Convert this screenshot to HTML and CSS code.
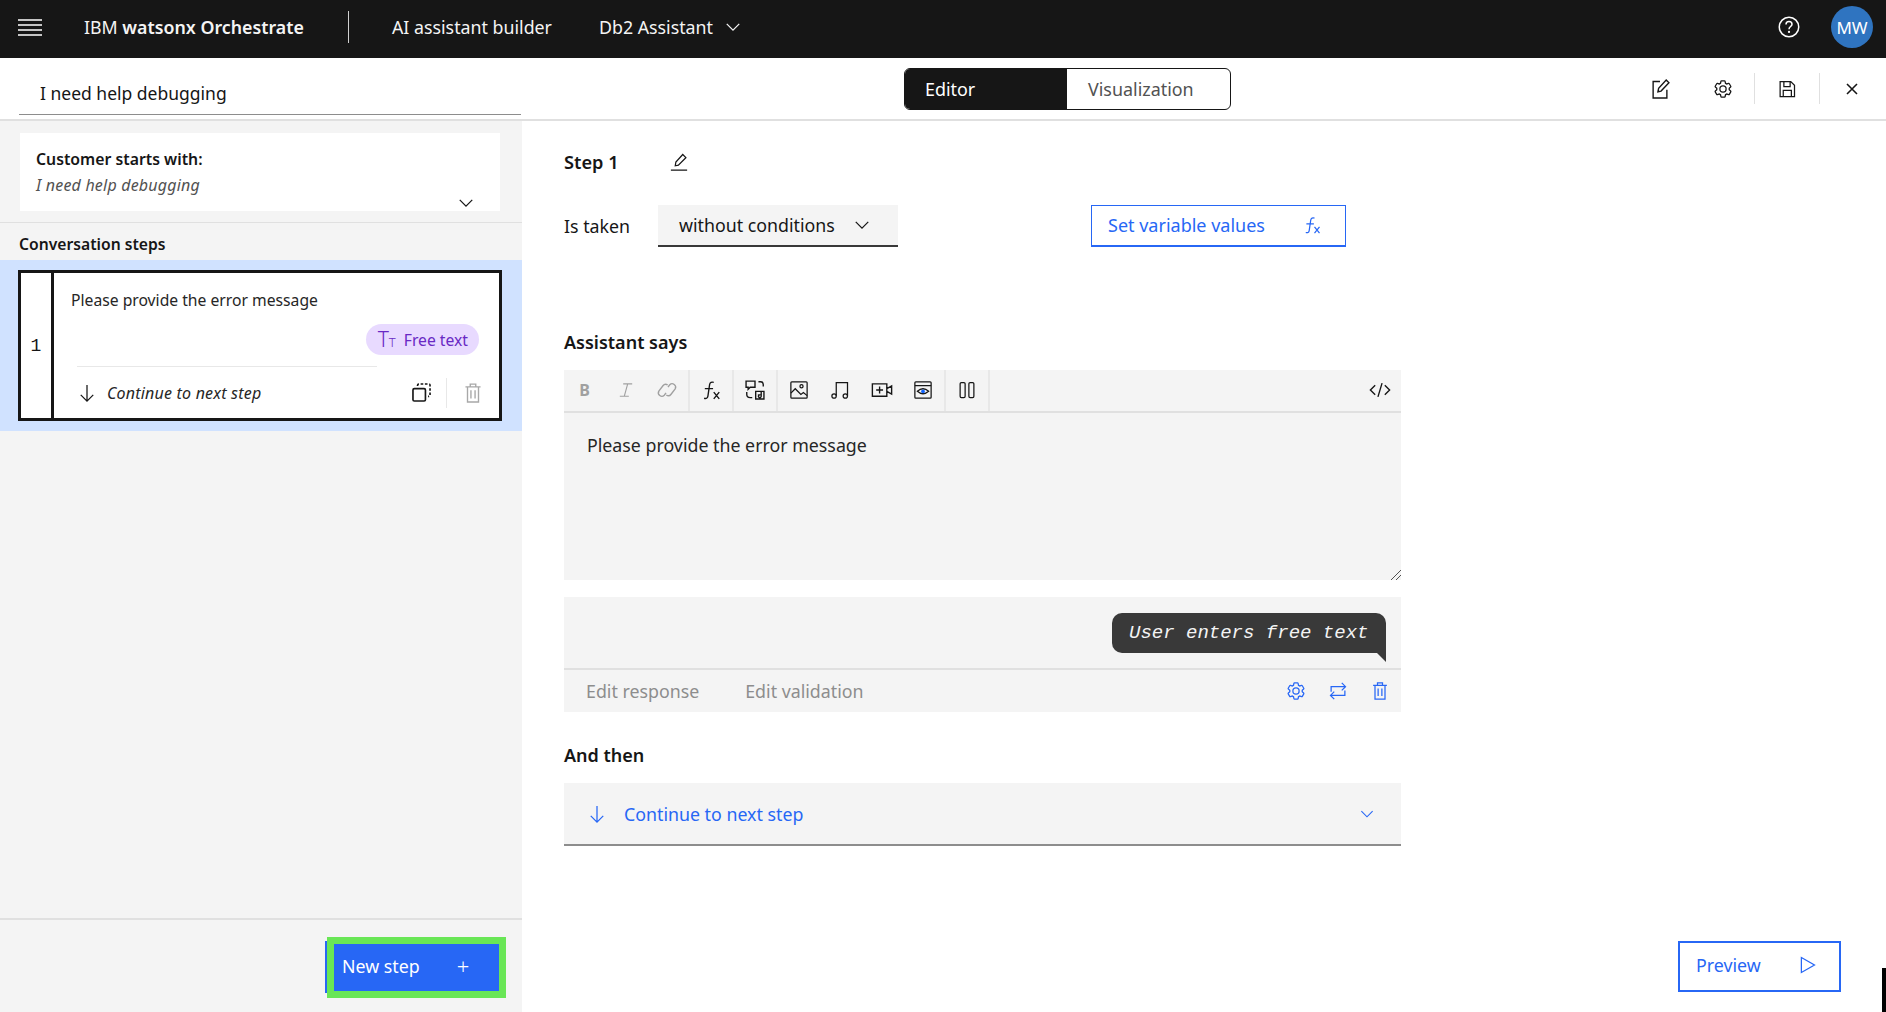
FILE: index.html
```html
<!DOCTYPE html>
<html lang="en">
<head>
    <meta charset="UTF-8">
    <meta name="viewport" content="width=device-width, initial-scale=1.0">
    <title>AI assistant builder</title>
    <link rel="stylesheet" href="styles.css">
</head>
<body>
    <svg class="sprites" aria-hidden="true">
        <symbol id="i-chevron" viewBox="0 0 32 32"><path d="M6 11l10 10 10-10" fill="none" stroke="currentColor" stroke-width="2"/></symbol>
        <symbol id="i-gear" viewBox="0 0 32 32"><path fill="currentColor" d="M27,16.76c0-.25,0-.5,0-.76s0-.51,0-.77l1.92-1.68A2,2,0,0,0,29.3,11L26.94,7a2,2,0,0,0-1.73-1,2,2,0,0,0-.64.1l-2.43.82a11.35,11.35,0,0,0-1.31-.75l-.51-2.52a2,2,0,0,0-2-1.61H13.64a2,2,0,0,0-2,1.61l-.51,2.52a11.48,11.48,0,0,0-1.32.75L7.43,6.06A2,2,0,0,0,6.79,6,2,2,0,0,0,5.06,7L2.7,11a2,2,0,0,0,.41,2.51L5,15.24c0,.25,0,.5,0,.76s0,.51,0,.77L3.11,18.45A2,2,0,0,0,2.7,21L5.06,25a2,2,0,0,0,1.73,1,2,2,0,0,0,.64-.1l2.43-.82a11.35,11.35,0,0,0,1.31.75l.51,2.52a2,2,0,0,0,2,1.61h4.72a2,2,0,0,0,2-1.61l.51-2.52a11.48,11.48,0,0,0,1.32-.75l2.42.82a2,2,0,0,0,.64.1,2,2,0,0,0,1.73-1L29.3,21a2,2,0,0,0-.41-2.51ZM25.21,24l-3.43-1.16a8.86,8.86,0,0,1-2.71,1.57L18.36,28H13.64l-.71-3.55a9.36,9.36,0,0,1-2.7-1.57L6.79,24,4.43,20l2.72-2.4a8.9,8.9,0,0,1,0-3.13L4.43,12,6.79,8l3.43,1.16a8.86,8.86,0,0,1,2.71-1.57L13.64,4h4.72l.71,3.55a9.36,9.36,0,0,1,2.7,1.57L25.21,8,27.57,12l-2.72,2.4a8.9,8.9,0,0,1,0,3.13L27.57,20Z"/><path fill="currentColor" d="M16,22a6,6,0,1,1,6-6A5.94,5.94,0,0,1,16,22Zm0-10a3.91,3.91,0,0,0-4,4,3.91,3.91,0,0,0,4,4,3.91,3.91,0,0,0,4-4A3.91,3.91,0,0,0,16,12Z"/></symbol>
        <symbol id="i-trash" viewBox="0 0 32 32"><path d="M5 7h22M12 7V3h8v4M8 7v22h16V7M13 12v12M19 12v12" fill="none" stroke="currentColor" stroke-width="2"/></symbol>
        <symbol id="i-down" viewBox="0 0 32 32"><path d="M16 3v26M6 19l10 10 10-10" fill="none" stroke="currentColor" stroke-width="2"/></symbol>
        <symbol id="i-fx" viewBox="0 0 32 32"><path d="M6 28c3 1 5 0 5.500-3L14 8c.5-3 3-4 6-3M7 14h12" fill="none" stroke="currentColor" stroke-width="2"/><path d="M20 19l8 10M28 19l-8 10" fill="none" stroke="currentColor" stroke-width="2"/></symbol>
    </svg>

    <header class="topbar">
        <svg class="ico-menu" viewBox="0 0 24 18"><path d="M0 2h24M0 7h24M0 12h24M0 17h24" stroke="#fff" stroke-width="1.500"/></svg>
        <div class="brand">IBM <b>watsonx Orchestrate</b></div>
        <div class="topbar-sep"></div>
        <div class="topbar-link">AI assistant builder</div>
        <div class="topbar-link assistant">Db2 Assistant <svg class="ico-20"><use href="#i-chevron"/></svg></div>
        <svg class="ico-help" viewBox="0 0 32 32"><circle cx="16" cy="16" r="13" fill="none" stroke="#fff" stroke-width="2"/><path d="M12 12.500c0-2.500 2-4 4-4s4 1.500 4 3.800c0 3-4 3.200-4 6.700" fill="none" stroke="#fff" stroke-width="2"/><circle cx="16" cy="22.500" r="1.500" fill="#fff"/></svg>
        <div class="avatar">MW</div>
    </header>

    <div class="subbar">
        <div class="title-field">I need help debugging</div>
        <div class="view-toggle">
            <div class="view-on">Editor</div>
            <div class="view-off">Visualization</div>
        </div>
        <div class="sub-actions">
            <button class="act"><svg class="ico-22" viewBox="0 0 32 32"><path d="M16 5H6v24h20V17" fill="none" stroke="currentColor" stroke-width="2"/><path d="M13 20l1-5L25 3l4 4-11.500 12z" fill="none" stroke="currentColor" stroke-width="2"/></svg></button>
            <button class="act"><svg class="ico-20"><use href="#i-gear"/></svg></button>
            <button class="act act-line"><svg class="ico-20" viewBox="0 0 32 32"><path d="M5 4h17l6 6v18H5zM11 4v8h10V4M10 28V18h13v10" fill="none" stroke="currentColor" stroke-width="2"/></svg></button>
            <button class="act act-line"><svg class="ico-20" viewBox="0 0 32 32"><path d="M8 8l16 16M24 8L8 24" fill="none" stroke="currentColor" stroke-width="2.500"/></svg></button>
        </div>
    </div>

    <div class="content">
        <aside class="sidebar">
            <div class="starts">
                <div class="starts-label">Customer starts with:</div>
                <div class="starts-text">I need help debugging</div>
                <svg class="ico-20 starts-chev"><use href="#i-chevron"/></svg>
            </div>
            <h2 class="steps-head">Conversation steps</h2>
            <div class="step-band">
                <div class="step-card">
                    <div class="step-num">1</div>
                    <div class="step-body">
                        <div class="step-msg">Please provide the error message</div>
                        <div class="pill-row">
                            <span class="pill"><span class="pill-tt">T<small>T</small></span> Free text</span>
                        </div>
                        <div class="step-foot">
                            <svg class="ico-20"><use href="#i-down"/></svg>
                            <span class="step-next">Continue to next step</span>
                            <svg class="ico-22 ico-copy" viewBox="0 0 32 32"><rect x="3" y="10" width="19" height="19" rx="2" fill="none" stroke="#161616" stroke-width="2.500"/><path d="M10 6V5q0-2 2-2h15q2 0 2 2v15q0 2-2 2h-1" fill="none" stroke="#161616" stroke-width="2.500" stroke-dasharray="4 2.500"/></svg>
                            <span class="foot-trash"><svg class="ico-22"><use href="#i-trash"/></svg></span>
                        </div>
                    </div>
                </div>
            </div>
            <div class="side-foot">
                <button class="new-step">New step <span class="plus">+</span></button>
            </div>
        </aside>

        <main class="editor">
            <div class="step-title">
                <h1>Step 1</h1>
                <svg class="ico-20" viewBox="0 0 32 32"><path d="M10 22l1-6L22 4l5 5-12 12zM3 29h26" fill="none" stroke="#161616" stroke-width="2"/></svg>
            </div>
            <div class="taken">
                <span class="taken-label">Is taken</span>
                <div class="taken-select">without conditions <svg class="ico-20"><use href="#i-chevron"/></svg></div>
                <button class="var-btn">Set variable values <svg class="ico-20"><use href="#i-fx"/></svg></button>
            </div>

            <h2 class="section-head says">Assistant says</h2>
            <div class="toolbar">
                <div class="tool-group g-text muted">
                    <span class="tool bold">B</span>
                    <span class="tool"><svg class="ico-18" viewBox="0 0 32 32"><path d="M11 5h16M5 27h16M19 5l-6 22" fill="none" stroke="currentColor" stroke-width="2"/></svg></span>
                    <span class="tool"><svg class="ico-22" viewBox="0 0 32 32"><path d="M14 20l-3 3a5 5 0 0 1-7-7l7-7a5 5 0 0 1 7 0M18 12l3-3a5 5 0 0 1 7 7l-7 7a5 5 0 0 1-7 0" transform="rotate(-8 16 16)" fill="none" stroke="currentColor" stroke-width="2"/></svg></span>
                </div>
                <div class="tool-group g-one"><span class="tool"><svg class="ico-22"><use href="#i-fx"/></svg></span></div>
                <div class="tool-group g-one"><span class="tool"><svg class="ico-22" viewBox="0 0 32 32"><path d="M3 3h13v9H9l-3 3v-3H3zM21 4h3q4 0 4 4v3M4 19v3q0 5 5 5h3M17 18h12v11H17zM25 18v7M25 25a2 2 0 1 1-1-1.700M21 22v1" fill="none" stroke="currentColor" stroke-width="2"/></svg></span></div>
                <div class="tool-group g-media">
                    <span class="tool"><svg class="ico-20" viewBox="0 0 32 32"><rect x="3" y="3" width="26" height="26" rx="1.500" fill="none" stroke="currentColor" stroke-width="2"/><path d="M3 21l7-7 9 9 4-3 6 5" fill="none" stroke="currentColor" stroke-width="2"/><circle cx="20" cy="10" r="2.500" fill="none" stroke="currentColor" stroke-width="2"/></svg></span>
                    <span class="tool"><svg class="ico-20" viewBox="0 0 32 32"><path d="M10 25V4h18v21" fill="none" stroke="currentColor" stroke-width="2"/><circle cx="6.500" cy="25.500" r="3.500" fill="none" stroke="currentColor" stroke-width="2"/><circle cx="24.500" cy="25.500" r="3.500" fill="none" stroke="currentColor" stroke-width="2"/></svg></span>
                    <span class="tool"><svg class="ico-22" viewBox="0 0 32 32"><path d="M2 7h21v18H2zM23 14l7-4v12l-7-4M12.500 11v10M7.500 16h10" fill="none" stroke="currentColor" stroke-width="2"/></svg></span>
                    <span class="tool"><svg class="ico-20" viewBox="0 0 32 32"><rect x="3" y="3" width="26" height="26" rx="1.500" fill="none" stroke="currentColor" stroke-width="2"/><path d="M3 9h26" stroke="currentColor" stroke-width="2"/><path d="M7 18q9-8 18 0-9 8-18 0z" fill="none" stroke="currentColor" stroke-width="2"/><circle cx="16" cy="18" r="3" fill="#0f62fe"/></svg></span>
                </div>
                <div class="tool-group g-one"><span class="tool"><svg class="ico-20" viewBox="0 0 32 32"><rect x="5" y="4" width="8" height="24" rx="2" fill="none" stroke="currentColor" stroke-width="2"/><rect x="19" y="4" width="8" height="24" rx="2" fill="none" stroke="currentColor" stroke-width="2"/></svg></span></div>
                <span class="tool code"><svg class="ico-22" viewBox="0 0 32 32"><path d="M9 9l-7 7 7 7M23 9l7 7-7 7M19 6l-6 20" fill="none" stroke="currentColor" stroke-width="2"/></svg></span>
            </div>
            <div class="message">
                Please provide the error message
                <svg class="resize" viewBox="0 0 10 10"><path d="M0 10L10 0M5 10l5-5" stroke="#525252" stroke-width="1"/></svg>
            </div>

            <div class="response">
                <div class="response-top">
                    <div class="bubble">User enters free text</div>
                </div>
                <div class="response-row">
                    <span class="resp-link">Edit response</span>
                    <span class="resp-link">Edit validation</span>
                    <span class="resp-icons">
                        <svg class="ico-20"><use href="#i-gear"/></svg>
                        <svg class="ico-20" viewBox="0 0 32 32"><path d="M5 17V9h22M22 3l6 6-6 6M27 15v8H5M10 17l-6 6 6 6" fill="none" stroke="currentColor" stroke-width="2"/></svg>
                        <svg class="ico-20"><use href="#i-trash"/></svg>
                    </span>
                </div>
            </div>

            <h2 class="section-head then">And then</h2>
            <div class="next-select">
                <svg class="ico-20"><use href="#i-down"/></svg>
                <span class="next-text">Continue to next step</span>
                <svg class="ico-18 next-chev"><use href="#i-chevron"/></svg>
            </div>

            <button class="preview">Preview <svg class="ico-20" viewBox="0 0 32 32"><path d="M7 4l21 12L7 28z" fill="none" stroke="currentColor" stroke-width="2"/></svg></button>
        </main>
    </div>
    <div class="corner-mark"></div>
</body>
</html>
```

FILE: styles.css
```css
* {
    box-sizing: border-box;
}
html, body {
    height: 100%;
}
body {
    margin: 0;
    display: flex;
    flex-direction: column;
    font-family: "Noto Sans", "Liberation Sans", sans-serif;
    color: #161616;
    background: #fff;
    overflow: hidden;
}
button {
    font-family: inherit;
    cursor: pointer;
}
h1, h2 {
    margin: 0;
    font-weight: 600;
}
.sprites {
    display: none;
}
.ico-18 { width: 18px; height: 18px; flex: none; }
.ico-20 { width: 20px; height: 20px; flex: none; }
.ico-22 { width: 22px; height: 22px; flex: none; }

/* top bar */
.topbar {
    height: 58px;
    flex: none;
    padding-bottom: 4px;
    display: flex;
    align-items: center;
    background: #161616;
    color: #f4f4f4;
    font-size: 17.800px;
}
.ico-menu {
    width: 24px;
    height: 18px;
    margin-left: 18px;
}
.brand {
    margin-left: 42px;
    width: 264px;
}
.brand b {
    font-weight: 600;
}
.topbar-sep {
    width: 1px;
    height: 32px;
    background: #d0d0d0;
}
.topbar-link {
    margin-left: 43px;
    display: flex;
    align-items: center;
    gap: 10px;
}
.assistant {
    margin-left: 47px;
}
.ico-help {
    width: 24px;
    height: 24px;
    margin-left: auto;
}
.avatar {
    width: 42px;
    height: 42px;
    margin: 0 13px 0 30px;
    border-radius: 50%;
    background: #2f74c0;
    color: #fff;
    font-size: 17px;
    display: flex;
    align-items: center;
    justify-content: center;
}

/* second row */
.subbar {
    height: 63px;
    flex: none;
    display: flex;
    align-items: flex-start;
    border-bottom: 2px solid #e0e0e0;
}
.title-field {
    width: 502px;
    height: 57px;
    margin-left: 19px;
    padding: 23px 0 0 21px;
    font-size: 17.500px;
    border-bottom: 1px solid #8d8d8d;
}
.view-toggle {
    width: 327px;
    height: 42px;
    margin: 10px 0 0 383px;
    display: flex;
    border: 1px solid #161616;
    border-radius: 6px;
    overflow: hidden;
    font-size: 17.900px;
}
.view-on {
    width: 162px;
    padding: 8px 0 0 20px;
    background: #161616;
    color: #fff;
}
.view-off {
    padding: 8px 0 0 21px;
    color: #525252;
}
.sub-actions {
    margin: 15px 0 0 397px;
    display: flex;
    color: #161616;
}
.act {
    width: 63px;
    height: 31px;
    padding: 0;
    background: none;
    border: none;
    color: inherit;
    display: flex;
    align-items: center;
    justify-content: center;
}
.act-line {
    width: 65px;
    border-left: 1px solid #e0e0e0;
}

.content {
    flex: 1;
    min-height: 0;
    display: flex;
}

/* left panel */
.sidebar {
    width: 522px;
    flex: none;
    display: flex;
    flex-direction: column;
    background: #f4f4f4;
}
.starts {
    position: relative;
    height: 78px;
    margin: 12px 22px 0 20px;
    padding: 15px 16px 0;
    background: #fff;
    font-size: 15.800px;
}
.starts-label {
    font-weight: 600;
}
.starts-text {
    margin-top: 4px;
    font-size: 16px;
    letter-spacing: .2px;
    font-style: italic;
    color: #525252;
}
.starts-chev {
    position: absolute;
    right: 24px;
    bottom: -2px;
    color: #161616;
}
.steps-head {
    margin-top: 11px;
    padding: 10px 0 0 19px;
    height: 38px;
    border-top: 1px solid #e0e0e0;
    font-size: 15.700px;
}
.step-band {
    padding: 10px 20px 10px 18px;
    background: #d0e2ff;
}
.step-card {
    height: 151px;
    display: flex;
    background: #fff;
    border: 3px solid #161616;
}
.step-num {
    width: 33px;
    flex: none;
    border-right: 3px solid #161616;
    display: flex;
    align-items: center;
    justify-content: center;
    font-family: "Liberation Mono", monospace;
    font-size: 18px;
}
.step-body {
    flex: 1;
    padding: 16px 0 0 17px;
}
.step-msg {
    font-size: 15.700px;
    color: #262626;
}
.pill-row {
    display: flex;
    justify-content: flex-end;
    margin: 13px 20px 0 0;
}
.pill {
    height: 31px;
    padding: 0 11px 0 12px;
    display: flex;
    align-items: center;
    gap: 8px;
    border-radius: 16px;
    background: #e8daff;
    color: #6929c4;
    font-size: 15.700px;
}
.pill-tt {
    font-size: 21px;
    font-weight: 300;
    line-height: 1;
}
.pill-tt small {
    font-size: 13px;
}
.step-foot {
    display: flex;
    align-items: center;
    height: 50px;
    margin: 11px 0 0 6px;
    padding: 3px 15px 0 0;
    font-size: 16px;
    position: relative;
}
.step-foot::before {
    content: "";
    position: absolute;
    left: 0;
    top: 0;
    width: 300px;
    height: 1px;
    background: #e8e8e8;
}
.step-next {
    margin-left: 10px;
    font-style: italic;
    letter-spacing: .2px;
    color: #262626;
}
.ico-copy {
    margin-left: auto;
    width: 21px;
    height: 21px;
}
.foot-trash {
    height: 30px;
    margin-left: 14px;
    padding-left: 15px;
    display: flex;
    align-items: center;
    border-left: 1px solid #e8e8e8;
    color: #a8a8a8;
}
.side-foot {
    margin-top: auto;
    height: 94px;
    border-top: 2px solid #e0e0e0;
    padding: 21px 0 0 325px;
}
.new-step {
    position: relative;
    width: 174px;
    height: 52px;
    padding: 0 0 3px 17px;
    display: flex;
    align-items: center;
    background: #2767f5;
    border: none;
    color: #fff;
    font-size: 17.800px;
}
.new-step::after {
    content: "";
    position: absolute;
    left: 2px;
    right: -7px;
    top: -4px;
    bottom: -5px;
    border: 7px solid #69e656;
}
.plus {
    margin-left: 37px;
    font-size: 22px;
    font-weight: 300;
    line-height: 1;
}

/* editor */
.editor {
    position: relative;
    flex: 1;
    padding: 29px 0 0 42px;
    font-size: 17.800px;
}
.step-title {
    height: 24px;
    display: flex;
    align-items: center;
    gap: 50px;
}
.step-title h1 {
    font-size: 18.200px;
}
.taken {
    margin-top: 31px;
    display: flex;
    align-items: center;
}
.taken-label {
    width: 94px;
}
.taken-select {
    width: 240px;
    height: 42px;
    padding-left: 21px;
    display: flex;
    align-items: center;
    gap: 17px;
    background: #f4f4f4;
    border-bottom: 2px solid #393939;
}
.var-btn {
    width: 255px;
    height: 42px;
    margin-left: 193px;
    padding: 0 23px 2px 16px;
    display: flex;
    align-items: center;
    justify-content: space-between;
    background: #fff;
    border: 1px solid #2767f5;
    border-bottom-width: 2px;
    color: #2767f5;
    font-size: 18px;
}
.section-head {
    font-size: 18px;
    line-height: 24px;
}
.says {
    margin-top: 83px;
}
.toolbar {
    width: 837px;
    height: 43px;
    margin-top: 16px;
    display: flex;
    background: #f4f4f4;
    border-bottom: 2px solid #e0e0e0;
}
.tool-group {
    display: flex;
    border-right: 2px solid #e8e8e8;
}
.g-text { width: 126px; }
.g-one { width: 44px; }
.g-media { width: 168px; }
.tool {
    flex: 1;
    padding-bottom: 2px;
    display: flex;
    align-items: center;
    justify-content: center;
}
.muted {
    color: #a0a0a0;
}
.bold {
    font-weight: 700;
    font-size: 16px;
}
.code {
    flex: none;
    width: 42px;
    margin-left: auto;
}
.message {
    position: relative;
    width: 837px;
    height: 167px;
    padding: 20px 0 0 23px;
    background: #f4f4f4;
    color: #262626;
}
.resize {
    position: absolute;
    right: 0;
    bottom: 0;
    width: 10px;
    height: 10px;
}
.response {
    width: 837px;
    margin-top: 17px;
    background: #f4f4f4;
}
.response-top {
    height: 73px;
    padding: 16px 15px 0 0;
    display: flex;
    justify-content: flex-end;
    border-bottom: 2px solid #e0e0e0;
}
.bubble {
    position: relative;
    width: 274px;
    height: 40px;
    padding-left: 17px;
    display: flex;
    align-items: center;
    background: #393939;
    border-radius: 10px 10px 0 10px;
    color: #f4f4f4;
    font-family: "Liberation Mono", monospace;
    font-style: italic;
    font-size: 19px;
    white-space: nowrap;
}
.bubble::after {
    content: "";
    position: absolute;
    right: 0;
    top: 40px;
    border-top: 9px solid #393939;
    border-left: 9px solid transparent;
}
.response-row {
    height: 42px;
    padding-left: 22px;
    display: flex;
    align-items: center;
    gap: 46px;
    color: #8d8d8d;
}
.resp-icons {
    margin-left: auto;
    margin-right: 11px;
    display: flex;
    gap: 22px;
    color: #2767f5;
}
.then {
    margin-top: 31px;
}
.next-select {
    width: 837px;
    height: 63px;
    margin-top: 16px;
    padding: 0 25px 0 23px;
    display: flex;
    align-items: center;
    background: #f4f4f4;
    border-bottom: 2px solid #8d8d8d;
    color: #2767f5;
}
.next-text {
    margin-left: 17px;
}
.next-chev {
    margin-left: auto;
}
.preview {
    position: absolute;
    right: 45px;
    bottom: 20px;
    width: 163px;
    height: 51px;
    padding: 0 22px 3px 16px;
    display: flex;
    align-items: center;
    justify-content: space-between;
    background: #fff;
    border: 2px solid #2767f5;
    color: #2767f5;
    font-size: 17.800px;
}
.corner-mark {
    position: absolute;
    right: 0;
    bottom: 0;
    width: 4px;
    height: 44px;
    background: #000;
}
```
